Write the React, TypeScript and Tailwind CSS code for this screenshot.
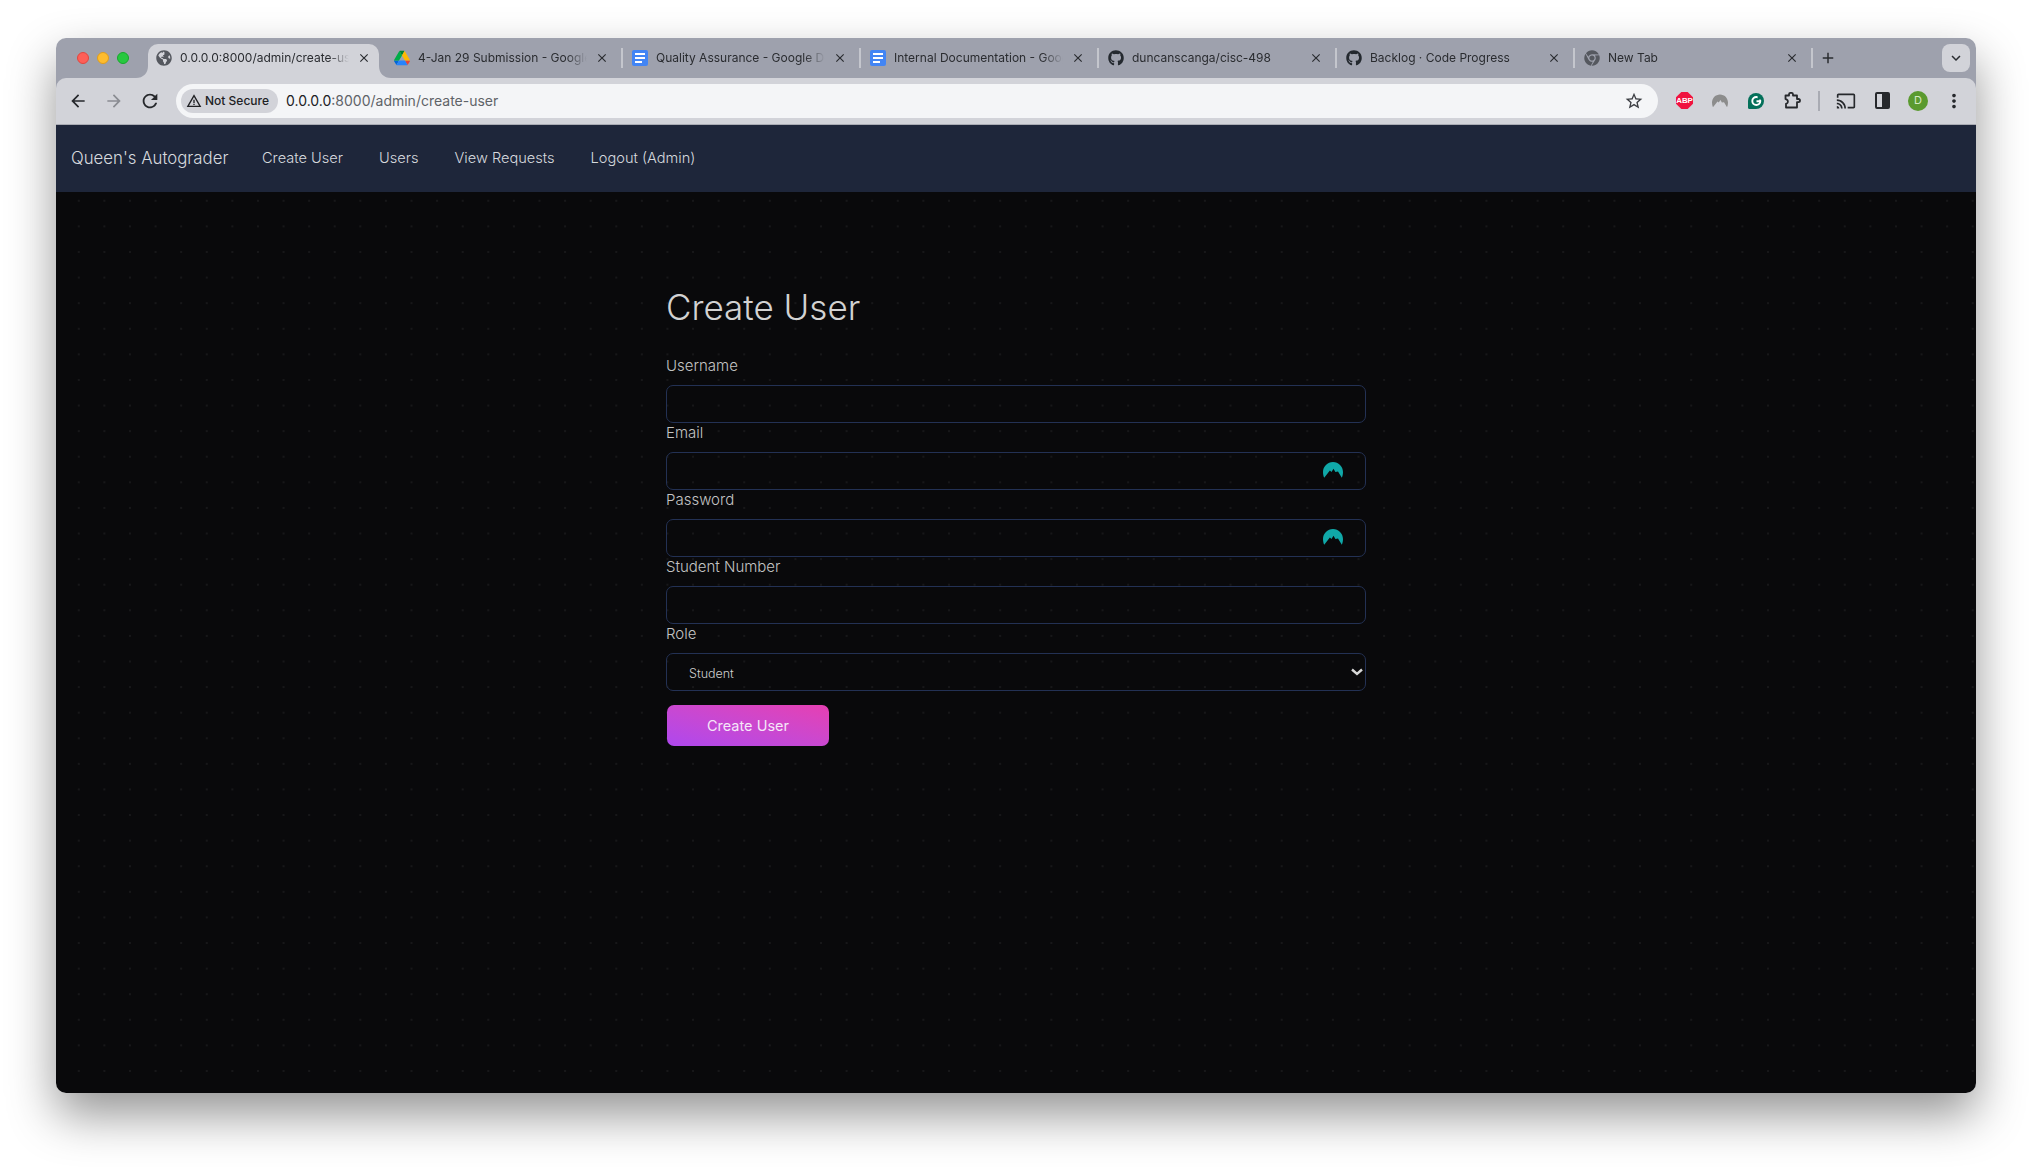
import { useState } from 'react';
import { FaGithub, FaChrome, FaGlobeAmericas } from 'react-icons/fa';
import {
  MdAdd,
  MdArrowBack,
  MdArrowForward,
  MdClose,
  MdKeyboardArrowDown,
  MdMoreVert,
  MdOutlineCast,
  MdRefresh,
  MdStarBorder,
  MdWarningAmber
} from 'react-icons/md';

function DriveIcon() {
  return (
    <svg viewBox="0 0 87.3 78" className="w-4 h-4">
      <path d="M6.6 66.85l3.85 6.65c.8 1.4 1.95 2.5 3.3 3.3L27.5 53H0c0 1.55.4 3.1 1.2 4.5z" fill="#0066da" />
      <path d="M43.65 25L29.9 1.2c-1.35.8-2.5 1.9-3.3 3.3L1.2 48.5A9.06 9.06 0 000 53h27.5z" fill="#00ac47" />
      <path d="M73.55 76.8c1.35-.8 2.5-1.9 3.3-3.3l1.6-2.75 7.65-13.25c.8-1.4 1.2-2.95 1.2-4.5H59.8l5.85 11.5z" fill="#ea4335" />
      <path d="M43.65 25L57.4 1.2C56.05.4 54.5 0 52.9 0H34.4c-1.6 0-3.15.45-4.5 1.2z" fill="#00832d" />
      <path d="M59.8 53H27.5L13.75 76.8c1.35.8 2.9 1.2 4.5 1.2h50.8c1.6 0 3.15-.45 4.5-1.2z" fill="#2684fc" />
      <path d="M73.4 26.5L60.7 4.5c-.8-1.4-1.95-2.5-3.3-3.3L43.65 25 59.8 53h27.45c0-1.55-.4-3.1-1.2-4.5z" fill="#ffba00" />
    </svg>
  );
}

function DocsIcon() {
  return (
    <div className="w-4 h-4 rounded-[2px] bg-[#4285f4] flex flex-col items-center justify-center gap-[2px]">
      <div className="w-[10px] h-[2px] bg-white" />
      <div className="w-[10px] h-[2px] bg-white" />
      <div className="w-[7px] h-[2px] bg-white self-start ml-[3px]" />
    </div>
  );
}

function NordMark({ className, fill }: { className: string; fill: string }) {
  return (
    <svg viewBox="0 0 20 16" className={className}>
      <path
        d="M1.2 15.8C.4 14.2 0 12.2 0 10 0 4.5 4.5 0 10 0s10 4.5 10 10c0 2.2-.4 4.2-1.2 5.8L15 9.6l-2.6.4-1.9-3.2-2 3.2-1.6-1.4z"
        fill={fill} />
    </svg>
  );
}

const tabs = [
  { title: '4-Jan 29 Submission - Google Drive', icon: <DriveIcon /> },
  { title: 'Quality Assurance - Google Docs', icon: <DocsIcon /> },
  { title: 'Internal Documentation - Google Docs', icon: <DocsIcon /> },
  { title: 'duncanscanga/cisc-498', icon: <FaGithub className="w-4 h-4 text-[#24292f]" /> },
  { title: 'Backlog · Code Progress', icon: <FaGithub className="w-4 h-4 text-[#24292f]" /> },
  { title: 'New Tab', icon: <FaChrome className="w-4 h-4 text-[#55585f]" /> }
];

function TabStrip() {
  return (
    <div className="h-10 bg-[#9ea1ad] flex items-end">
      <div className="flex self-center items-center gap-2 ml-[21px] mr-[19px]">
        <div className="w-3 h-3 rounded-full bg-[#fe5f57] border border-[#e2463f]" />
        <div className="w-3 h-3 rounded-full bg-[#febc2e] border border-[#e09e1c]" />
        <div className="w-3 h-3 rounded-full bg-[#28c840] border border-[#17a92c]" />
      </div>

      {/* active tab */}
      <div className="relative w-[231px] mr-[7px] h-[34px] pb-[6px] pl-2 flex items-center bg-[#d2d3d9] rounded-t-[10px]">
        <svg viewBox="0 0 10 10" className="absolute left-[-12px] bottom-0 w-3 h-3">
          <path d="M10 0v10H0C6 10 10 6 10 0z" fill="#d2d3d9" />
        </svg>
        <svg viewBox="0 0 10 10" className="absolute right-[-12px] bottom-0 w-3 h-3">
          <path d="M0 0v10h10C4 10 0 6 0 0z" fill="#d2d3d9" />
        </svg>
        <FaGlobeAmericas className="w-4 h-4 text-[#55585f] shrink-0" />
        <div className="ml-2 w-[169px] overflow-hidden whitespace-nowrap text-[12px] text-[#2a2c30] [mask-image:linear-gradient(to_right,black_88%,transparent)]">
          0.0.0.0:8000/admin/create-user
        </div>
        <div className="w-[30px] flex justify-center">
          <MdClose className="w-[14px] h-[14px] text-[#2a2c30]" />
        </div>
      </div>

      {tabs.map((tab) =>
      <div key={tab.title} className="w-[238px] h-[34px] pb-[6px] pl-2 flex items-center">
          <div className="w-4 h-4 shrink-0 flex items-center justify-center">{tab.icon}</div>
          <div className="ml-2 w-[169px] overflow-hidden whitespace-nowrap text-[12px] text-[#2a2c30] [mask-image:linear-gradient(to_right,black_88%,transparent)]">
            {tab.title}
          </div>
          <div className="w-[30px] flex justify-center">
            <MdClose className="w-[14px] h-[14px] text-[#2a2c30]" />
          </div>
          <div className="ml-1 w-[2px] h-[20px] bg-[#c4c6cd]" />
        </div>
      )}

      <div className="h-[34px] pb-[6px] flex items-center">
        <MdAdd className="ml-[5px] w-[18px] h-[18px] text-[#2a2c30]" />
      </div>

      <div className="self-center ml-auto mr-[6px] w-7 h-7 rounded-[8px] bg-[#d2d3d9] flex items-center justify-center">
        <MdKeyboardArrowDown className="w-[18px] h-[18px] text-[#2a2c30]" />
      </div>
    </div>
  );
}

function ToolButton({ children }: { children: React.ReactNode }) {
  return <div className="w-9 h-9 shrink-0 flex items-center justify-center">{children}</div>;
}

function Toolbar() {
  return (
    <div className="bg-[#9ea1ad]">
      <div className="h-[47px] pb-px pl-1 pr-1 flex items-center bg-[#d2d3d9] rounded-t-[10px] border-b border-[#a9abb3]">
        <ToolButton><MdArrowBack className="w-5 h-5 text-[#26282c]" /></ToolButton>
        <ToolButton><MdArrowForward className="w-5 h-5 text-[#8a8c92]" /></ToolButton>
        <ToolButton><MdRefresh className="w-[22px] h-[22px] text-[#26282c]" /></ToolButton>

        <div className="ml-[8px] flex-1 h-[34px] rounded-full bg-[#f4f5f7] flex items-center pl-[5px] pr-[14px]">
          <div className="h-6 w-[97px] rounded-full bg-[#d2d3d9] flex items-center pl-[5px] text-[12px] font-medium text-[#202124]">
            <MdWarningAmber className="w-4 h-4 mr-[3px]" />
            Not Secure
          </div>
          <div className="ml-[8px] text-[14px] text-[#5f6368]">
            <span className="text-[#202124]">0.0.0.0</span>:8000/admin/create-user
          </div>
          <MdStarBorder className="ml-auto w-[20px] h-[20px] text-[#3c3e43]" />
        </div>

        <div className="ml-[8px] flex items-center">
          <ToolButton>
            <svg viewBox="0 0 16 16" className="w-[17px] h-[17px]">
              <polygon points="5,0 11,0 16,5 16,11 11,16 5,16 0,11 0,5" fill="#f0133f" />
              <text x="8" y="10.8" textAnchor="middle" fontSize="7.4" fontWeight="700" fill="#fff" fontFamily="Liberation Sans, sans-serif">ABP</text>
            </svg>
          </ToolButton>
          <ToolButton>
            <NordMark className="w-[16px] h-[14px]" fill="#8c8c8c" />
          </ToolButton>
          <ToolButton>
            <svg viewBox="0 0 16 16" className="w-[16px] h-[16px]">
              <path d="M8 0a8 8 0 010 16H1.5A1.5 1.5 0 010 14.5V8a8 8 0 018-8z" fill="#04705a" />
              <circle cx="8.3" cy="8" r="4" fill="none" stroke="#fff" strokeWidth="1.9" />
              <rect x="9.6" y="3" width="4" height="3.6" fill="#04705a" />
              <path d="M8.5 8.2h4" stroke="#fff" strokeWidth="1.9" />
            </svg>
          </ToolButton>
          <ToolButton>
            <svg viewBox="0 0 17 17" className="w-[17px] h-[17px]" fill="none" stroke="#26282c" strokeWidth="1.8" strokeLinejoin="round">
              <path d="M1.5 3.5H5V2.2a1.4 1.4 0 011.4-1.3h1.2A1.4 1.4 0 019 2.2v1.3h4V7h1.4a1.5 1.5 0 010 3.2H13v5.3H2v-3.7l1.2-.6c.9-.4.9-2.9 0-3.3L1.5 7z" />
            </svg>
          </ToolButton>
          <div className="mx-2 w-[2px] h-5 bg-[#a9abb3]" />
          <ToolButton><MdOutlineCast className="w-5 h-5 text-[#26282c]" /></ToolButton>
          <ToolButton>
            <div className="w-[15px] h-[17px] rounded-[2px] border-2 border-[#26282c] flex">
              <div className="w-1/2" />
              <div className="w-1/2 bg-[#26282c]" />
            </div>
          </ToolButton>
          <ToolButton>
            <div className="w-5 h-5 rounded-full bg-[#5a9a2f] text-[#d6ebc4] text-[11px] flex items-center justify-center">D</div>
          </ToolButton>
          <ToolButton><MdMoreVert className="w-[22px] h-[22px] text-[#26282c]" /></ToolButton>
        </div>
      </div>
    </div>
  );
}

const navLinks = ['Create User', 'Users', 'View Requests', 'Logout (Admin)'];

function Navbar() {
  return (
    <nav className="h-[67px] bg-[#1e263a] flex items-center pl-[15px] text-[#d6d9de] font-light">
      <span className="w-[191px] text-[16.8px]">Queen's Autograder</span>
      <div className="flex gap-9 text-[14.6px]">
        {navLinks.map((link) =>
        <a key={link} href="#">{link}</a>
        )}
      </div>
    </nav>
  );
}

const fieldClass =
'w-full h-[38px] rounded-[7px] border border-[#233154] bg-transparent px-[22px] text-[12.5px] font-light text-[#d0d0d0] outline-none';

const labelClass = 'block h-[29px] leading-[19px] text-[15px] font-light text-[#c4c4c4]';

function Field({ label, withMark }: { label: string; withMark?: boolean }) {
  const [value, setValue] = useState('');
  return (
    <div>
      <label className={labelClass}>{label}</label>
      <div className="relative">
        <input
          value={value}
          onChange={(e) => setValue(e.target.value)}
          className={fieldClass} />
        {withMark &&
        <NordMark className="absolute right-[23px] top-[10px] w-5 h-4" fill="#10a8a8" />
        }
      </div>
    </div>
  );
}

export default function App() {
  return (
    <div className="h-[1167px] overflow-hidden bg-white pt-[38px] px-[56px] font-['Inter',sans-serif]">
      <div className="h-[1055px] rounded-[10px] overflow-hidden flex flex-col shadow-[0_22px_48px_rgba(0,0,0,0.42)]">
        <TabStrip />
        <Toolbar />
        <Navbar />
        <main className="flex-1 bg-[#09090b] bg-[radial-gradient(circle,rgba(255,255,255,0.06)_1px,transparent_1.5px)] bg-[size:25.6px_25.6px] bg-[position:10px_-4px]">
          <div className="w-[700px] ml-[610px] pt-[93px]">
            <h1 className="h-[71px] text-[35px] leading-[44px] font-light text-[#d2d2d2]">Create User</h1>
            <form className="flex flex-col" onSubmit={(e) => e.preventDefault()}>
              <Field label="Username" />
              <Field label="Email" withMark />
              <Field label="Password" withMark />
              <Field label="Student Number" />
              <div>
                <label className={labelClass}>Role</label>
                <div className="relative">
                  <select defaultValue="Student" className={`${fieldClass} appearance-none pt-[5px]`}>
                    <option className="bg-[#09090b]">Student</option>
                    <option className="bg-[#09090b]">TA</option>
                    <option className="bg-[#09090b]">Admin</option>
                  </select>
                  <svg viewBox="0 0 12 8" className="absolute right-[3px] top-[15px] w-3 h-2" fill="none" stroke="#d8d8d8" strokeWidth="2.4">
                    <path d="M1 1.5l5 4.5 5-4.5" />
                  </svg>
                </div>
              </div>
              <button className="mt-[14px] ml-px w-[162px] h-[41px] rounded-[7px] bg-linear-to-tr from-[#ae47ee] to-[#e63fb2] text-[14.5px] text-[#f5e6f8]">
                Create User
              </button>
            </form>
          </div>
        </main>
      </div>
    </div>
  );
}
